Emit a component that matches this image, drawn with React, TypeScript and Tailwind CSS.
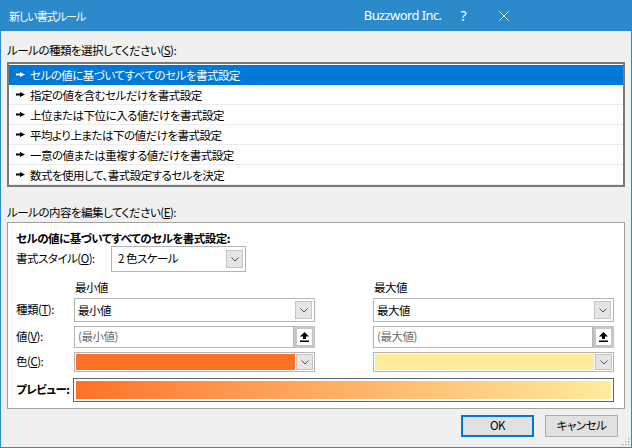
import React from "react";

const rules = [
  "セルの値に基づいてすべてのセルを書式設定",
  "指定の値を含むセルだけを書式設定",
  "上位または下位に入る値だけを書式設定",
  "平均より上または下の値だけを書式設定",
  "一意の値または重複する値だけを書式設定",
  "数式を使用して、書式設定するセルを決定",
];

function Pointer({ light }: { light?: boolean }) {
  return (
    <svg width="9" height="5" viewBox="0 0 9 5" className="shrink-0">
      <rect x="0" y="1.5" width="5" height="2" fill={light ? "#fff" : "#000"} />
      <polygon points="4,0 9,2.5 4,5" fill={light ? "#fff" : "#000"} />
    </svg>
  );
}

function Chevron() {
  return (
    <svg width="8" height="5" viewBox="0 0 8 5">
      <polyline points="0.5,0.5 4,4 7.5,0.5" fill="none" stroke="#555" strokeWidth="1" />
    </svg>
  );
}

function DropButton() {
  return (
    <div className="w-[17px] h-[18px] mr-[2px] bg-[#e5e5e5] border border-[#c4c4c4] flex items-center justify-center shrink-0">
      <Chevron />
    </div>
  );
}

function Select({ value }: { value: string }) {
  return (
    <div className="h-[24px] bg-white border border-[#b4b4b4] flex items-center">
      <span className="flex-1 pl-[3px] leading-[16px]">{value}</span>
      <DropButton />
    </div>
  );
}

function RefInput({ placeholder }: { placeholder: string }) {
  return (
    <div className="h-[22px] flex">
      <div className="flex-1 bg-white border border-[#b4b4b4] flex items-center pl-[3px] text-[#6d6d6d]">
        {placeholder}
      </div>
      <div className="w-[21px] h-[22px] bg-white border-[3px] border-[#c6c6c6] flex items-center justify-center">
        <svg width="9" height="10" viewBox="0 0 9 10">
          <polygon points="4.5,0 9,4.5 6,4.5 6,7 3,7 3,4.5 0,4.5" fill="#000" />
          <rect x="0" y="8.5" width="9" height="1.5" fill="#000" />
        </svg>
      </div>
    </div>
  );
}

function ColorPick({ color }: { color: string }) {
  return (
    <div className="h-[20px] bg-white border border-[#b4b4b4] flex items-center p-[1px]">
      <div className={`flex-1 h-full ${color}`} />
      <div className="w-[17px] h-full ml-[1px] bg-[#e5e5e5] border border-[#c4c4c4] flex items-center justify-center">
        <Chevron />
      </div>
    </div>
  );
}

export default function App() {
  return (
    <div className="relative w-[632px] h-[448px] flex flex-col bg-[#f0f0f0] text-black text-[11.5px] tracking-[-0.5px] font-['Noto_Sans_CJK_JP',sans-serif] [font-feature-settings:'palt']">
      {/* Title bar */}
      <div className="h-[31px] shrink-0 bg-[#2c8acb] text-white flex items-center">
        <span className="pl-[9px] leading-[16px] text-[11px] tracking-[-1px]">新しい書式ルール</span>
        <span className="ml-auto text-[13px] tracking-[-0.6px] font-['Noto_Sans',sans-serif]">Buzzword Inc.</span>
        <span className="ml-[19px] text-[14px] font-['Noto_Sans',sans-serif]">?</span>
        <svg width="10" height="10" viewBox="0 0 10 10" className="ml-[33px] mr-[123px]">
          <path d="M0.5 0.5L9.5 9.5M9.5 0.5L0.5 9.5" stroke="#fff" strokeWidth="1" />
        </svg>
      </div>

      <div className="flex-1 border-x border-b border-[#2c8acb] px-[6px] flex flex-col">
        <div className="mt-[11px] h-[16px] leading-[16px]">
          ルールの種類を選択してください(<span className="underline">S</span>):
        </div>

        {/* Rule types */}
        <div className="mt-[4px] border-2 border-[#7a7a7a] bg-white pt-[1px]">
          {rules.map((r, i) => (
            <div
              key={r}
              className={`h-[20px] flex items-center gap-[5px] pl-[7px] border-b ${
                i === 0 ? "bg-[#0078d7] text-white border-[#0078d7]" : "border-[#ececec]"
              }`}
            >
              <Pointer light={i === 0} />
              <span className="leading-[16px]">{r}</span>
            </div>
          ))}
        </div>

        <div className="mt-[17px] h-[16px] leading-[16px]">
          ルールの内容を編集してください(<span className="underline">E</span>):
        </div>

        {/* Rule description */}
        <div className="mt-[2px] bg-white border border-[#a0a0a0] pl-[8px] pr-[10px] pt-[7px] pb-[6px]">
          <div className="h-[16px] leading-[16px] font-bold">セルの値に基づいてすべてのセルを書式設定:</div>

          <div className="h-[26px] flex items-center">
            <span className="w-[95px]">
              書式スタイル(<span className="underline">O</span>):
            </span>
            <div className="w-[135px] h-[26px] bg-white border border-[#b4b4b4] flex items-center">
              <span className="flex-1 pl-[6px]">2 色スケール</span>
              <DropButton />
            </div>
          </div>

          <div className="grid grid-cols-[58px_241px_58px_241px] mt-[7px]">
            <div />
            <div className="h-[16px] leading-[16px] pl-[1px]">最小値</div>
            <div />
            <div className="h-[16px] leading-[16px] pl-[1px]">最大値</div>

            <div className="mt-[3px] flex items-center">
              種類(<span className="underline">T</span>):
            </div>
            <div className="mt-[3px]">
              <Select value="最小値" />
            </div>
            <div />
            <div className="mt-[3px]">
              <Select value="最大値" />
            </div>

            <div className="mt-[4px] flex items-center">
              値(<span className="underline">V</span>):
            </div>
            <div className="mt-[4px]">
              <RefInput placeholder="(最小値)" />
            </div>
            <div />
            <div className="mt-[4px]">
              <RefInput placeholder="(最大値)" />
            </div>

            <div className="mt-[4px] flex items-center">
              色(<span className="underline">C</span>):
            </div>
            <div className="mt-[4px]">
              <ColorPick color="bg-[#fd7126]" />
            </div>
            <div />
            <div className="mt-[4px]">
              <ColorPick color="bg-[#ffeb9c]" />
            </div>
          </div>

          <div className="mt-[6px] h-[24px] flex items-center">
            <span className="w-[57px] shrink-0 whitespace-nowrap font-bold">プレビュー:</span>
            <div className="flex-1 h-[24px] border border-[#646464] bg-white p-[2px]">
              <div className="w-full h-full bg-gradient-to-r from-[#fd7126] to-[#ffeb9c]" />
            </div>
          </div>
        </div>

        {/* Buttons */}
        <div className="mt-[6px] flex justify-end gap-[11px] pr-[7px]">
          <button className="w-[73px] h-[22px] border-2 border-[#0078d7] bg-[#e1e1e1] flex items-center justify-center">
            OK
          </button>
          <button className="w-[73px] h-[22px] border border-[#adadad] bg-[#e1e1e1] flex items-center justify-center">
            キャンセル
          </button>
        </div>
      </div>

      {/* Resize grip */}
      <svg width="9" height="9" viewBox="0 0 9 9" className="absolute right-[2px] bottom-[2px]">
        {[
          [7, 1],
          [7, 4],
          [4, 4],
          [7, 7],
          [4, 7],
          [1, 7],
        ].map(([x, y]) => (
          <rect key={`${x}-${y}`} x={x} y={y} width="1.5" height="1.5" fill="#b8b8b8" />
        ))}
      </svg>
    </div>
  );
}
